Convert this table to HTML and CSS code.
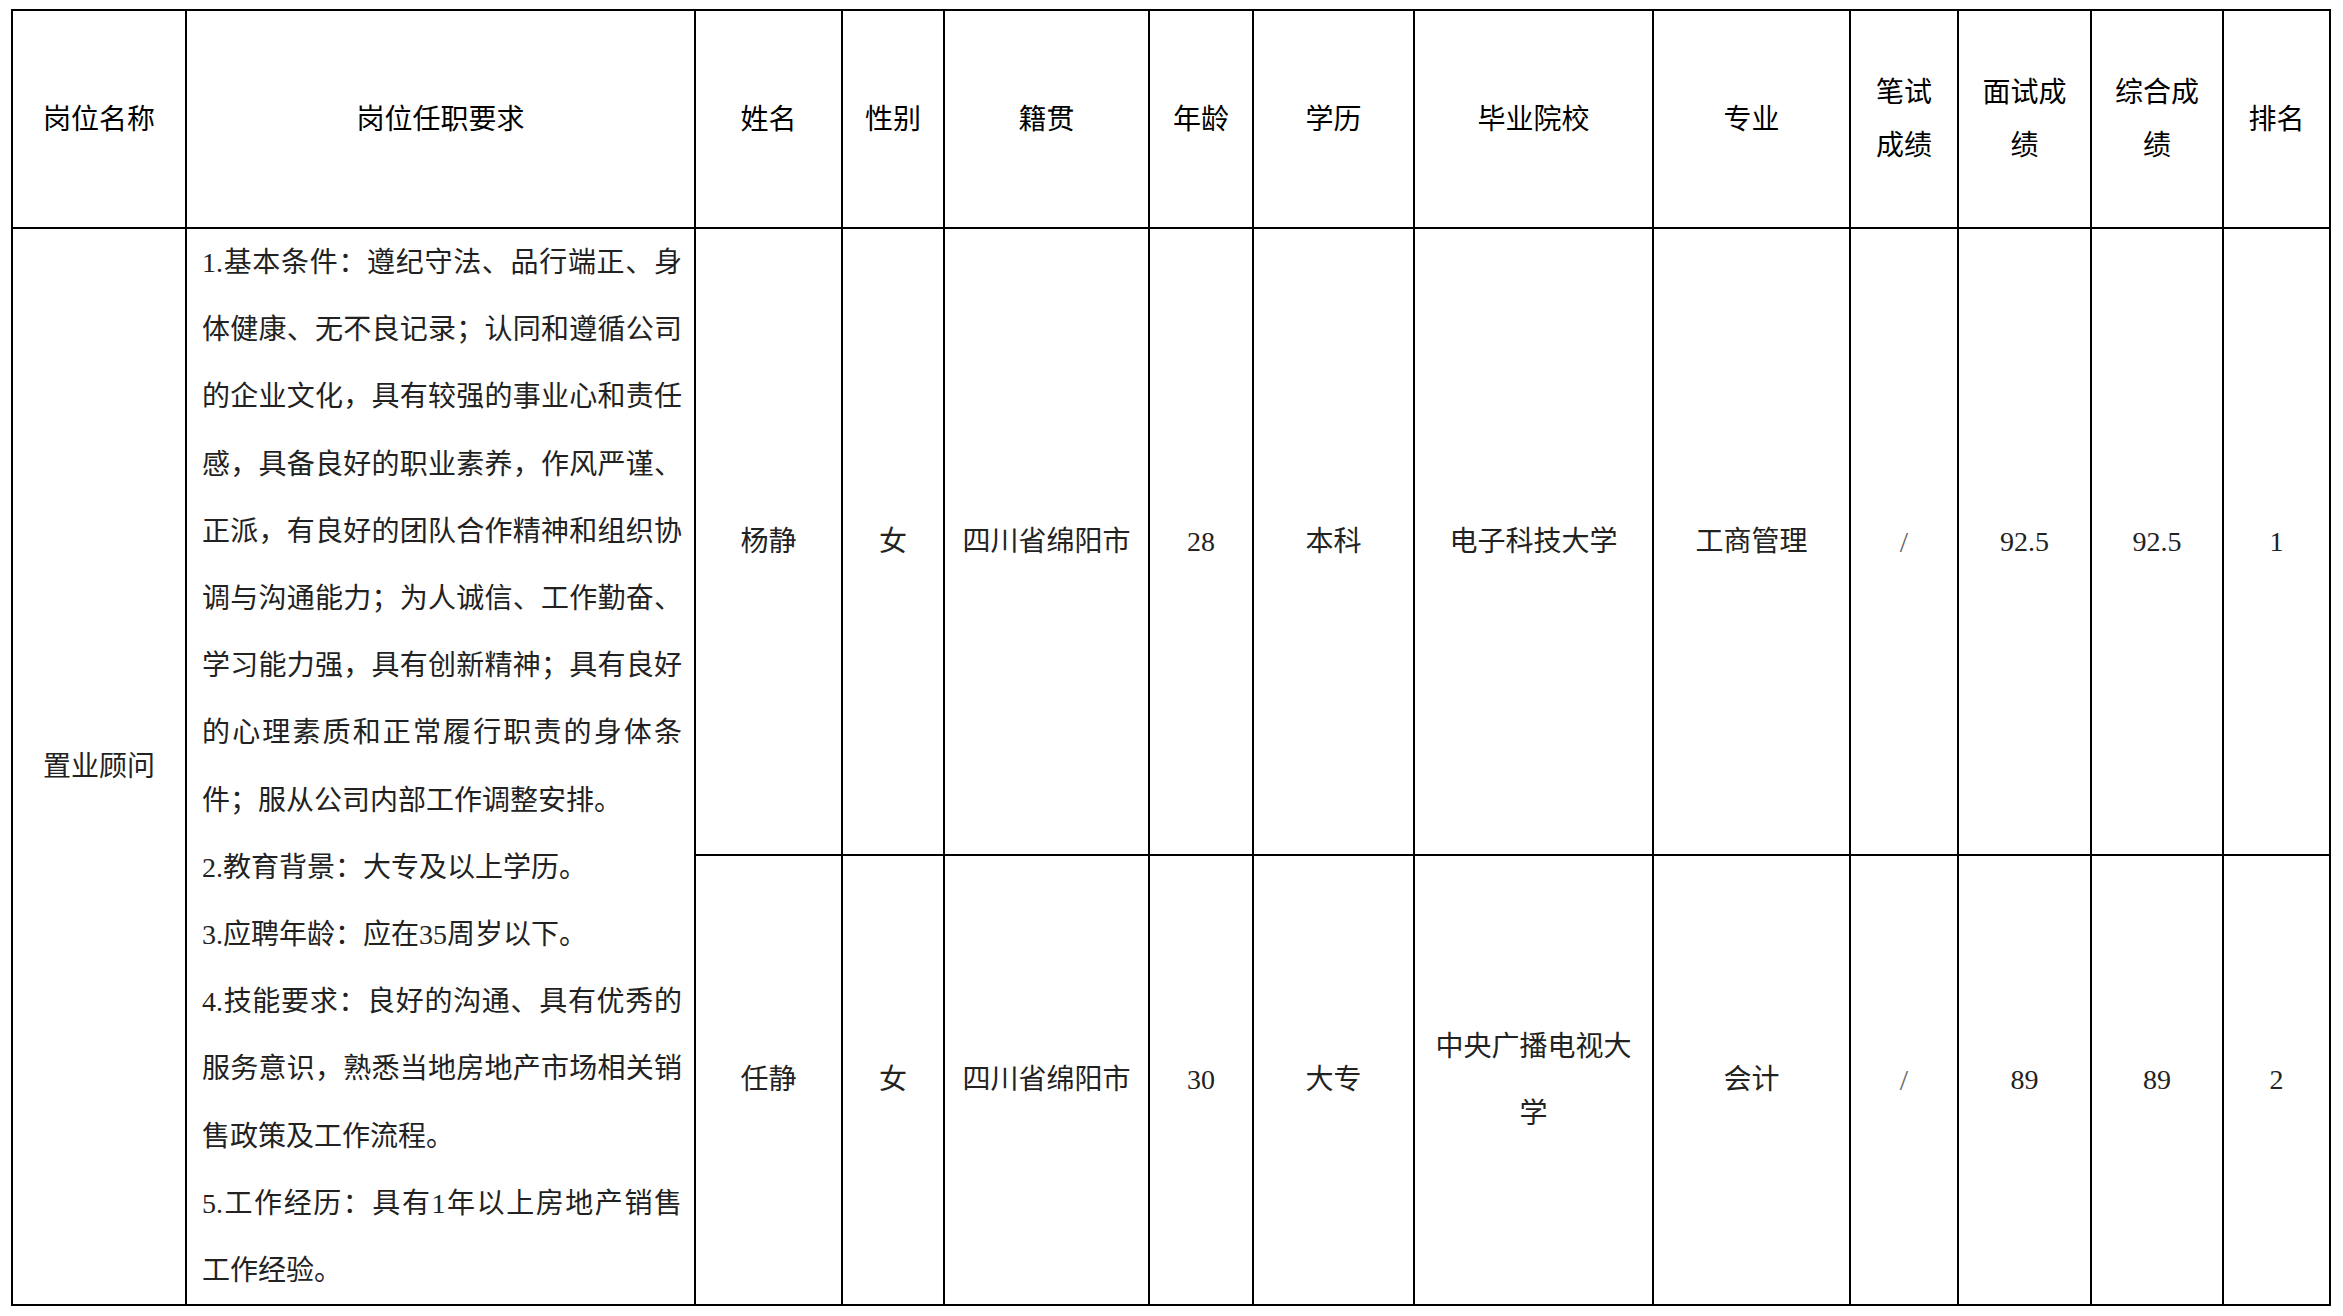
FILE: index.html
```html
<!DOCTYPE html>
<html lang="zh-CN">
<head>
<meta charset="utf-8">
<title>招聘成绩表</title>
<link rel="stylesheet" href="styles.css">
</head>
<body>
<table class="grid">
  <colgroup>
    <col class="c-post">
    <col class="c-req">
    <col class="c-name">
    <col class="c-sex">
    <col class="c-origin">
    <col class="c-age">
    <col class="c-edu">
    <col class="c-school">
    <col class="c-major">
    <col class="c-written">
    <col class="c-interview">
    <col class="c-total">
    <col class="c-rank">
  </colgroup>
  <thead>
    <tr class="head-row">
      <th>岗位名称</th>
      <th>岗位任职要求</th>
      <th>姓名</th>
      <th>性别</th>
      <th>籍贯</th>
      <th>年龄</th>
      <th>学历</th>
      <th>毕业院校</th>
      <th>专业</th>
      <th>笔试成绩</th>
      <th>面试成绩</th>
      <th>综合成绩</th>
      <th>排名</th>
    </tr>
  </thead>
  <tbody>
    <tr class="row-a">
      <td rowspan="2">置业顾问</td>
      <td rowspan="2" class="req">
        <p>1.基本条件：遵纪守法、品行端正、身体健康、无不良记录；认同和遵循公司的企业文化，具有较强的事业心和责任感，具备良好的职业素养，作风严谨、正派，有良好的团队合作精神和组织协调与沟通能力；为人诚信、工作勤奋、学习能力强，具有创新精神；具有良好的心理素质和正常履行职责的身体条件；服从公司内部工作调整安排。</p>
        <p>2.教育背景：大专及以上学历。</p>
        <p>3.应聘年龄：应在35周岁以下。</p>
        <p>4.技能要求：良好的沟通、具有优秀的服务意识，熟悉当地房地产市场相关销售政策及工作流程。</p>
        <p>5.工作经历：具有1年以上房地产销售工作经验。</p>
      </td>
      <td>杨静</td>
      <td>女</td>
      <td>四川省绵阳市</td>
      <td>28</td>
      <td>本科</td>
      <td>电子科技大学</td>
      <td>工商管理</td>
      <td class="muted">/</td>
      <td>92.5</td>
      <td>92.5</td>
      <td>1</td>
    </tr>
    <tr class="row-b">
      <td>任静</td>
      <td>女</td>
      <td>四川省绵阳市</td>
      <td>30</td>
      <td>大专</td>
      <td>中央广播电视大学</td>
      <td>会计</td>
      <td class="muted">/</td>
      <td>89</td>
      <td>89</td>
      <td>2</td>
    </tr>
  </tbody>
</table>
</body>
</html>
```

FILE: styles.css
```css
html, body {
  margin: 0;
  padding: 0;
  background: #ffffff;
}

body {
  padding: 9px 0 0 11px;
  font-family: "Liberation Serif", "Noto Sans CJK SC", serif;
  color: #111111;
}

.grid {
  border-collapse: collapse;
  table-layout: fixed;
  width: 2320px;
}

.c-post { width: 174px; }
.c-req { width: 509px; }
.c-name { width: 147px; }
.c-sex { width: 102px; }
.c-origin { width: 205px; }
.c-age { width: 104px; }
.c-edu { width: 161px; }
.c-school { width: 239px; }
.c-major { width: 197px; }
.c-written { width: 108px; }
.c-interview { width: 133px; }
.c-total { width: 132px; }
.c-rank { width: 107px; }

.grid th,
.grid td {
  border: 2px solid #000000;
  padding: 0 16px;
  text-align: center;
  vertical-align: middle;
  font-size: 28px;
  font-weight: normal;
}

.grid th {
  line-height: 53px;
  color: #000000;
}

.grid td {
  line-height: 67.2px;
  color: #222222;
}

.head-row th {
  height: 216px;
}

.row-a td {
  height: 624px;
}

.row-b td {
  height: 448px;
}

.grid td.req {
  padding: 0 12px 0 15px;
  text-align: justify;
  vertical-align: top;
}

.req p {
  margin: 0;
}

.grid td.muted {
  color: #666666;
  font-size: 30px;
}
```
